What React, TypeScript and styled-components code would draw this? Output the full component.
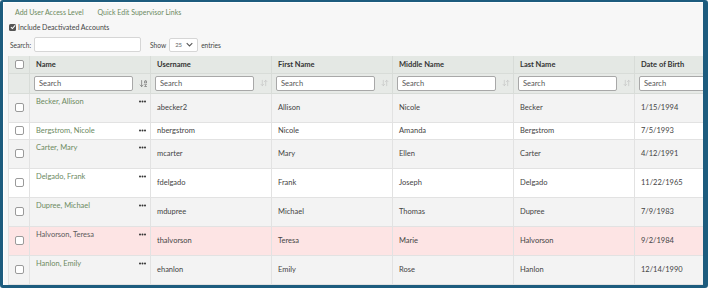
import React from 'react';
import styled, { createGlobalStyle } from 'styled-components';
import { ArrowDownUp, ArrowDownAZ } from 'lucide-react';

const GlobalStyle = createGlobalStyle`
  html, body {
    margin: 0;
    padding: 0;
    background: #f7f7f7;
  }
  body {
    font-family: Lato, "Open Sans", sans-serif;
  }
`;

type Person = {
  name: string;
  user: string;
  first: string;
  middle: string;
  last: string;
  dob: string;
  short?: boolean;
  inactive?: boolean;
};

const people: Person[] = [
  { name: 'Becker, Allison', user: 'abecker2', first: 'Allison', middle: 'Nicole', last: 'Becker', dob: '1/15/1994' },
  { name: 'Bergstrom, Nicole', user: 'nbergstrom', first: 'Nicole', middle: 'Amanda', last: 'Bergstrom', dob: '7/5/1993', short: true },
  { name: 'Carter, Mary', user: 'mcarter', first: 'Mary', middle: 'Ellen', last: 'Carter', dob: '4/12/1991' },
  { name: 'Delgado, Frank', user: 'fdelgado', first: 'Frank', middle: 'Joseph', last: 'Delgado', dob: '11/22/1965' },
  { name: 'Dupree, Michael', user: 'mdupree', first: 'Michael', middle: 'Thomas', last: 'Dupree', dob: '7/9/1983' },
  { name: 'Halvorson, Teresa', user: 'thalvorson', first: 'Teresa', middle: 'Marie', last: 'Halvorson', dob: '9/2/1984', inactive: true },
  { name: 'Hanlon, Emily', user: 'ehanlon', first: 'Emily', middle: 'Rose', last: 'Hanlon', dob: '12/14/1990' },
];

const columns = ['Name', 'Username', 'First Name', 'Middle Name', 'Last Name', 'Date of Birth'];

export default function App() {
  return (
    <>
      <GlobalStyle />
      <Frame>
        <Toolbar>
          <ToolLink>Add User Access Level</ToolLink>
          <ToolLink>Quick Edit Supervisor Links</ToolLink>
        </Toolbar>
        <CheckRow>
          <CheckedBox>
            <svg width="6" height="6" viewBox="0 0 10 10">
              <path d="M1.5 5.2 L4 7.6 L8.6 2.4" fill="none" stroke="#fff" strokeWidth="1.8" />
            </svg>
          </CheckedBox>
          Include Deactivated Accounts
        </CheckRow>
        <Controls>
          <label>Search:</label>
          <SearchBox />
          <ShowLabel>Show</ShowLabel>
          <Select>
            25
            <svg width="7" height="5" viewBox="0 0 10 6">
              <path d="M1 1 L5 5 L9 1" fill="none" stroke="#555" strokeWidth="1.5" />
            </svg>
          </Select>
          <label>entries</label>
        </Controls>
        <Table>
          <colgroup>
            <col style={{ width: 21 }} />
            {columns.map((c) => (
              <col key={c} style={{ width: 121 }} />
            ))}
          </colgroup>
          <thead>
            <tr>
              <Th>
                <Box />
              </Th>
              {columns.map((c) => (
                <Th key={c}>{c}</Th>
              ))}
            </tr>
            <FilterRow>
              <FilterCell />
              {columns.map((c, i) => (
                <FilterCell key={c}>
                  <FilterWrap>
                    <FilterInput>Search</FilterInput>
                    {i < columns.length - 1 && (
                      <SortIcon $active={i === 0}>
                        {i === 0 ? <ArrowDownAZ size={9} strokeWidth={2} /> : <ArrowDownUp size={8} strokeWidth={2} />}
                      </SortIcon>
                    )}
                  </FilterWrap>
                </FilterCell>
              ))}
            </FilterRow>
          </thead>
          <tbody>
            {people.map((p, idx) => (
              <Row key={p.user} $short={p.short} $bg={p.inactive ? '#fde4e4' : idx % 2 === 0 ? '#f3f3f3' : '#ffffff'}>
                <Td>
                  <Box />
                </Td>
                <NameTd>
                  <NameWrap>
                    <NameLink $inactive={p.inactive}>{p.name}</NameLink>
                    <Dots>
                      <svg width="7" height="3" viewBox="0 0 7 3">
                        <circle cx="1" cy="1.5" r="1" fill="#333" />
                        <circle cx="3.5" cy="1.5" r="1" fill="#333" />
                        <circle cx="6" cy="1.5" r="1" fill="#333" />
                      </svg>
                    </Dots>
                  </NameWrap>
                </NameTd>
                <Td>{p.user}</Td>
                <Td>{p.first}</Td>
                <Td>{p.middle}</Td>
                <Td>{p.last}</Td>
                <Td>{p.dob}</Td>
              </Row>
            ))}
          </tbody>
        </Table>
      </Frame>
    </>
  );
}

const Frame = styled.div`
  box-sizing: border-box;
  width: 708px;
  height: 288px;
  overflow: hidden;
  border-style: solid;
  border-color: #1d5c7e;
  border-width: 2px 5px 3px 3px;
  border-radius: 3px;
  background: #f7f7f7;
  box-shadow: inset 1px 1px 0 #ffffff;
  color: #444;
  font-size: 8px;
  padding-left: 5px;
`;

const Toolbar = styled.div`
  display: flex;
  gap: 14px;
  padding: 5px 0 0 7px;
  height: 13px;
`;

const ToolLink = styled.span`
  color: #6d8a5f;
  font-size: 7px;
  line-height: 11px;
`;

const CheckRow = styled.div`
  display: flex;
  align-items: center;
  gap: 2px;
  height: 14px;
  padding-left: 1px;
  font-size: 7px;
  color: #444;
`;

const CheckedBox = styled.span`
  display: inline-flex;
  align-items: center;
  justify-content: center;
  width: 7px;
  height: 7px;
  border-radius: 1.5px;
  background: #555;
`;

const Controls = styled.div`
  display: flex;
  align-items: center;
  height: 17px;
  padding: 2px 0 0 2px;
  gap: 3px;
  font-size: 6.6px;
  color: #444;
`;

const SearchBox = styled.div`
  width: 105px;
  height: 13px;
  background: #fff;
  border: 1px solid #d6d6d6;
  border-radius: 2px;
`;

const ShowLabel = styled.label`
  margin-left: 6px;
`;

const Select = styled.div`
  display: flex;
  align-items: center;
  justify-content: space-between;
  box-sizing: border-box;
  width: 29px;
  height: 14px;
  padding: 0 4px 0 5px;
  background: #fff;
  border: 1px solid #d6d6d6;
  border-radius: 2px;
  font-size: 6px;
  color: #666;
`;

const Table = styled.table`
  margin-top: 3px;
  border-collapse: collapse;
  table-layout: fixed;
  width: 747px;
  font-size: 7.5px;
  color: #444;
`;

const Th = styled.th`
  height: 17px;
  padding: 0 6px;
  box-sizing: border-box;
  text-align: left;
  font-weight: 700;
  color: #333;
  background: #e4e8e4;
  border: 1px solid #d8dcd8;
  border-top: none;
`;

const FilterRow = styled.tr`
  background: #e7eae7;
`;

const FilterCell = styled.td`
  height: 19px;
  padding: 0 0 0 4px;
  border: 1px solid #d8dcd8;
`;

const FilterWrap = styled.div`
  display: flex;
  align-items: center;
`;

const FilterInput = styled.div`
  box-sizing: border-box;
  width: 99px;
  height: 15px;
  padding: 0 4px;
  line-height: 13px;
  background: #fff;
  border: 1px solid #a8a8a8;
  border-radius: 2px;
  color: #555;
  font-size: 7.5px;
  flex-shrink: 0;
`;

const SortIcon = styled.span<{ $active?: boolean }>`
  display: flex;
  margin-left: 6px;
  color: ${(p) => (p.$active ? '#777' : '#c4c4c4')};
`;

const Row = styled.tr<{ $short?: boolean; $bg: string }>`
  height: ${(p) => (p.$short ? 17 : 29)}px;
  background: ${(p) => p.$bg};
`;

const Td = styled.td`
  padding: 0 6px;
  border: 1px solid #e2e2e2;
  vertical-align: middle;
  white-space: nowrap;
`;

const NameTd = styled(Td)`
  vertical-align: top;
  padding-top: 3px;
  padding-right: 4px;
`;

const NameWrap = styled.div`
  display: flex;
  align-items: flex-start;
  justify-content: space-between;
`;

const NameLink = styled.span<{ $inactive?: boolean }>`
  color: ${(p) => (p.$inactive ? '#5b5b5b' : '#6d8a5f')};
`;

const Dots = styled.span`
  display: flex;
  padding-top: 3px;
`;

const Box = styled.span`
  display: block;
  box-sizing: border-box;
  width: 9px;
  height: 9px;
  margin: 0 auto;
  background: #fff;
  border: 1px solid #9a9a9a;
  border-radius: 2px;
`;
